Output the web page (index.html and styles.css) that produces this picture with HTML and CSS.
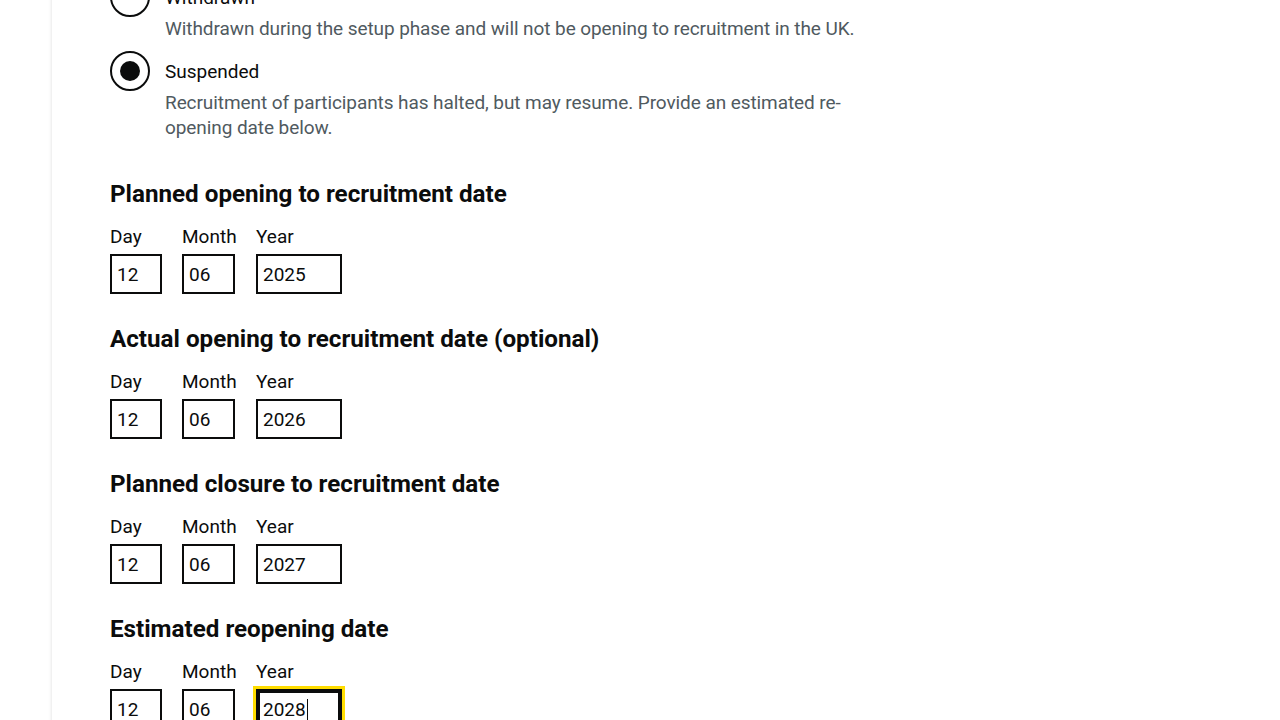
FILE: index.html
```html
<!DOCTYPE html>
<html lang="en">
<head>
<meta charset="utf-8">
<title>Recruitment status</title>
<link rel="stylesheet" href="styles.css">
</head>
<body>
<div class="page">
  <main class="content">
    <div class="radios">
      <div class="radio-item">
        <span class="radio"></span>
        <div class="radio-body">
          <div class="radio-label">Withdrawn</div>
          <div class="radio-hint">Withdrawn during the setup phase and will not be opening to recruitment in the UK.</div>
        </div>
      </div>
      <div class="radio-item">
        <span class="radio checked"></span>
        <div class="radio-body">
          <div class="radio-label">Suspended</div>
          <div class="radio-hint">Recruitment of participants has halted, but may resume. Provide an estimated re-opening date below.</div>
        </div>
      </div>
    </div>

    <fieldset class="date-group">
      <legend class="legend">Planned opening to recruitment date</legend>
      <div class="date-input">
        <div class="date-item day"><label class="label">Day</label><div class="input">12</div></div>
        <div class="date-item month"><label class="label">Month</label><div class="input">06</div></div>
        <div class="date-item year"><label class="label">Year</label><div class="input">2025</div></div>
      </div>
    </fieldset>

    <fieldset class="date-group">
      <legend class="legend">Actual opening to recruitment date (optional)</legend>
      <div class="date-input">
        <div class="date-item day"><label class="label">Day</label><div class="input">12</div></div>
        <div class="date-item month"><label class="label">Month</label><div class="input">06</div></div>
        <div class="date-item year"><label class="label">Year</label><div class="input">2026</div></div>
      </div>
    </fieldset>

    <fieldset class="date-group">
      <legend class="legend">Planned closure to recruitment date</legend>
      <div class="date-input">
        <div class="date-item day"><label class="label">Day</label><div class="input">12</div></div>
        <div class="date-item month"><label class="label">Month</label><div class="input">06</div></div>
        <div class="date-item year"><label class="label">Year</label><div class="input">2027</div></div>
      </div>
    </fieldset>

    <fieldset class="date-group">
      <legend class="legend">Estimated reopening date</legend>
      <div class="date-input">
        <div class="date-item day"><label class="label">Day</label><div class="input">12</div></div>
        <div class="date-item month"><label class="label">Month</label><div class="input">06</div></div>
        <div class="date-item year"><label class="label">Year</label><div class="input focused">2028<span class="caret"></span></div></div>
      </div>
    </fieldset>
  </main>
</div>
</body>
</html>
```

FILE: styles.css
```css
html, body {
  margin: 0;
  padding: 0;
  background: #ffffff;
  overflow: hidden;
}
body {
  font-family: Roboto, "Liberation Sans", Arial, sans-serif;
  color: #0b0c0c;
}
.page {
  margin-left: 52px;
  min-height: 1000px;
  background: #ffffff;
  box-shadow: -1px 0 3px rgba(0, 0, 0, 0.09);
}
.content {
  width: 780px;
  padding-left: 58px;
}
.radios {
  margin-top: -23px;
  margin-bottom: 39px;
}
.radio-item {
  display: flex;
  margin-bottom: 10px;
}
.radio {
  flex: 0 0 40px;
  width: 40px;
  height: 40px;
  box-sizing: border-box;
  border: 2px solid #0b0c0c;
  border-radius: 50%;
  display: flex;
  align-items: center;
  justify-content: center;
}
.radio.checked::after {
  content: "";
  width: 20px;
  height: 20px;
  border-radius: 50%;
  background: #0b0c0c;
}
.radio-body {
  flex: 1;
  padding: 0 15px;
}
.radio-label {
  font-size: 19px;
  line-height: 25px;
  padding: 8px 0 6px;
}
.radio-hint {
  font-size: 19px;
  line-height: 25px;
  color: #505a5f;
  letter-spacing: -0.08px;
}
.date-group {
  border: 0;
  margin: 0 0 30px 0;
  padding: 0;
  min-width: 0;
}
.legend {
  padding: 0;
  font-size: 24.2px;
  line-height: 30px;
  font-weight: 700;
  margin-bottom: 15px;
}
.date-input {
  display: flex;
}
.date-item {
  display: flex;
  flex-direction: column;
}
.date-item.day { width: 52px; margin-right: 20px; }
.date-item.month { width: 53px; margin-right: 21px; }
.date-item.year { width: 86px; }
.label {
  font-size: 19px;
  line-height: 25px;
  margin-bottom: 5px;
  white-space: nowrap;
}
.input {
  box-sizing: border-box;
  height: 40px;
  border: 2px solid #0b0c0c;
  padding: 6px 5px 4px;
  font-size: 19px;
  line-height: 26px;
  color: #0b0c0c;
  display: flex;
  align-items: center;
}
.input.focused {
  outline: 3px solid #ffdd00;
  outline-offset: 0;
  box-shadow: inset 0 0 0 2px #0b0c0c;
}
.caret {
  display: inline-block;
  width: 1px;
  height: 22px;
  background: #0b0c0c;
  margin-left: 1px;
}
```
